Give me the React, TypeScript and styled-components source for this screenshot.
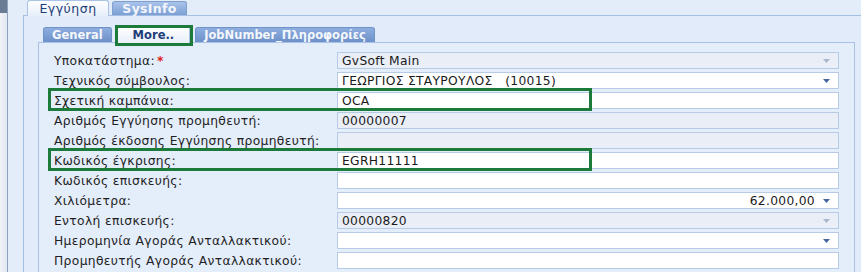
import styled, { createGlobalStyle } from "styled-components";

const GlobalStyle = createGlobalStyle`
  html, body {
    margin: 0;
    padding: 0;
    background: #dde8f7;
    overflow: hidden;
  }
  body {
    font-family: "DejaVu Sans", Verdana, sans-serif;
    font-size: 12.3px;
    color: #1c1c1c;
  }
`;

interface FieldData {
  label: string
  value?: string
  required?: boolean
  readOnly?: boolean
  align?: "left" | "right"
  arrow?: "on" | "off"
  highlight?: boolean
}

const fields: FieldData[] = [
  { label: "Υποκατάστημα:", value: "GvSoft Main", required: true, readOnly: true, arrow: "off" },
  { label: "Τεχνικός σύμβουλος:", value: "ΓΕΩΡΓΙΟΣ ΣΤΑΥΡΟΥΛΟΣ   (10015)", arrow: "on" },
  { label: "Σχετική καμπάνια:", value: "OCA", highlight: true },
  { label: "Αριθμός Εγγύησης προμηθευτή:", value: "00000007", readOnly: true },
  { label: "Αριθμός έκδοσης Εγγύησης προμηθευτή:", readOnly: true },
  { label: "Κωδικός έγκρισης:", value: "EGRH11111", highlight: true },
  { label: "Κωδικός επισκευής:" },
  { label: "Χιλιόμετρα:", value: "62.000,00", align: "right", arrow: "on" },
  { label: "Εντολή επισκευής:", value: "00000820", readOnly: true, arrow: "off" },
  { label: "Ημερομηνία Αγοράς Ανταλλακτικού:", arrow: "on" },
  { label: "Προμηθευτής Αγοράς Ανταλλακτικού:" },
];

const Arrow = ({ enabled }: { enabled: boolean }) => (
  <ArrowIcon width="7" height="4" viewBox="0 0 7 4">
    <polygon points="0,0 7,0 3.5,4" fill={enabled ? "#45679e" : "#aab7cc"} />
  </ArrowIcon>
);

const App = () => {
  return (
    <>
      <GlobalStyle />
      <Screen>
        <LeftRail>
          <RailCap />
        </LeftRail>
        <Main>
          <OuterTabs>
            <OuterTab $active>Εγγύηση</OuterTab>
            <OuterTab>SysInfo</OuterTab>
          </OuterTabs>
          <OuterPanel>
            <InnerTabs>
              <InnerTab>General</InnerTab>
              <InnerTab $active>
                More..
                <TabHighlight />
              </InnerTab>
              <InnerTab>JobNumber_Πληροφορίες</InnerTab>
            </InnerTabs>
            <InnerPanel>
              {fields.map((f) => (
                <Row key={f.label}>
                  <Label>
                    {f.label}
                    {f.required && <Required>*</Required>}
                  </Label>
                  <Input $readOnly={!!f.readOnly}>
                    <Value $align={f.align || "left"}>{f.value}</Value>
                    {f.arrow && <Arrow enabled={f.arrow === "on"} />}
                  </Input>
                  {f.highlight && <RowHighlight />}
                </Row>
              ))}
            </InnerPanel>
          </OuterPanel>
        </Main>
      </Screen>
    </>
  );
};

const Screen = styled.div`
  display: flex;
  width: 861px;
  height: 272px;
  overflow: hidden;
`;

const LeftRail = styled.div`
  width: 7px;
  flex-shrink: 0;
  background: linear-gradient(to right, #f1f4f8, #e2e8f0);
  border-right: 1px solid #8ea2c0;
`;

const RailCap = styled.div`
  height: 13px;
  background: #6a7c93;
`;

const Main = styled.div`
  flex: 1;
  display: flex;
  flex-direction: column;
  padding-left: 15px;
  background: #e3ecf9;
`;

const OuterTabs = styled.div`
  display: flex;
  align-items: flex-end;
  gap: 3px;
  height: 15px;
  padding-left: 4px;
`;

const OuterTab = styled.div<{ $active?: boolean }>`
  display: flex;
  align-items: center;
  justify-content: center;
  height: ${(p) => (p.$active ? "16px" : "14px")};
  margin-bottom: ${(p) => (p.$active ? "-1px" : "0")};
  width: ${(p) => (p.$active ? "82px" : "75px")};
  box-sizing: border-box;
  border: 1px solid ${(p) => (p.$active ? "#a9c2e6" : "#7f9fcf")};
  border-bottom: none;
  border-radius: 3px 3px 0 0;
  background: ${(p) =>
    p.$active
      ? "linear-gradient(#ffffff, #e6eefa)"
      : "linear-gradient(#a9c3ea, #7c9fd5)"};
  color: ${(p) => (p.$active ? "#1e3e78" : "#f2f6fc")};
  font-weight: ${(p) => (p.$active ? "normal" : "bold")};
  font-size: 12.5px;
  letter-spacing: ${(p) => (p.$active ? "0.5px" : "0.3px")};
  position: relative;
  z-index: 1;
`;

const OuterPanel = styled.div`
  flex: 1;
  border-top: 1px solid #a3bde3;
  border-left: 1px solid #a3bde3;
  background: #e1ebf9;
  padding: 9px 6px 0 14px;
  display: flex;
  flex-direction: column;
`;

const InnerTabs = styled.div`
  display: flex;
  align-items: flex-end;
  gap: 5px;
  height: 17px;
  padding-left: 5px;
`;

const InnerTab = styled.div<{ $active?: boolean }>`
  position: relative;
  display: flex;
  align-items: center;
  justify-content: center;
  height: ${(p) => (p.$active ? "17px" : "15px")};
  margin-bottom: ${(p) => (p.$active ? "-1px" : "0")};
  padding: 0 ${(p) => (p.$active ? "15px" : "8px")};
  min-width: 67px;
  box-sizing: border-box;
  border: 1px solid ${(p) => (p.$active ? "#a9c2e6" : "#6f93c8")};
  border-bottom: none;
  border-radius: 3px 3px 0 0;
  background: ${(p) =>
    p.$active
      ? "linear-gradient(#ffffff, #e8effa)"
      : "linear-gradient(#8eaedf, #6c90c8)"};
  color: ${(p) => (p.$active ? "#1e3e78" : "#f4f7fc")};
  font-weight: bold;
  font-size: 11.5px;
  z-index: 1;
`;

const TabHighlight = styled.div`
  position: absolute;
  left: -3px;
  right: -4px;
  top: -2px;
  bottom: -3px;
  border: 3px solid #1c7a3b;
`;

const InnerPanel = styled.div`
  flex: 1;
  border: 1px solid #a9c1e6;
  border-bottom: none;
  background: #e4edfa;
  padding: 9px 15px 0 15px;
  display: flex;
  flex-direction: column;
  gap: 4px;
`;

const Row = styled.div`
  position: relative;
  display: grid;
  grid-template-columns: 283px 1fr;
  align-items: center;
  height: 16px;
`;

const Label = styled.div`
  white-space: nowrap;
  color: #1f1f1f;
  letter-spacing: 0.35px;
`;

const Required = styled.span`
  color: #e0201a;
  font-weight: bold;
  margin-left: 2px;
`;

const Input = styled.div<{ $readOnly: boolean }>`
  display: flex;
  align-items: center;
  height: 17px;
  box-sizing: border-box;
  border: 1px solid #b8cbe6;
  background: ${(p) => (p.$readOnly ? "#e9eef7" : "#ffffff")};
  padding: 0 8px 0 4px;
  gap: 8px;
`;

const Value = styled.div<{ $align: "left" | "right" }>`
  flex: 1;
  white-space: pre;
  text-align: ${(p) => p.$align};
  color: #1a1a1a;
  letter-spacing: 0.3px;
`;

const ArrowIcon = styled.svg`
  flex-shrink: 0;
`;

const RowHighlight = styled.div`
  position: absolute;
  left: -6px;
  top: -4px;
  width: 544px;
  height: 23px;
  box-sizing: border-box;
  border: 3px solid #1c7a3b;
  pointer-events: none;
`;

export default App;
